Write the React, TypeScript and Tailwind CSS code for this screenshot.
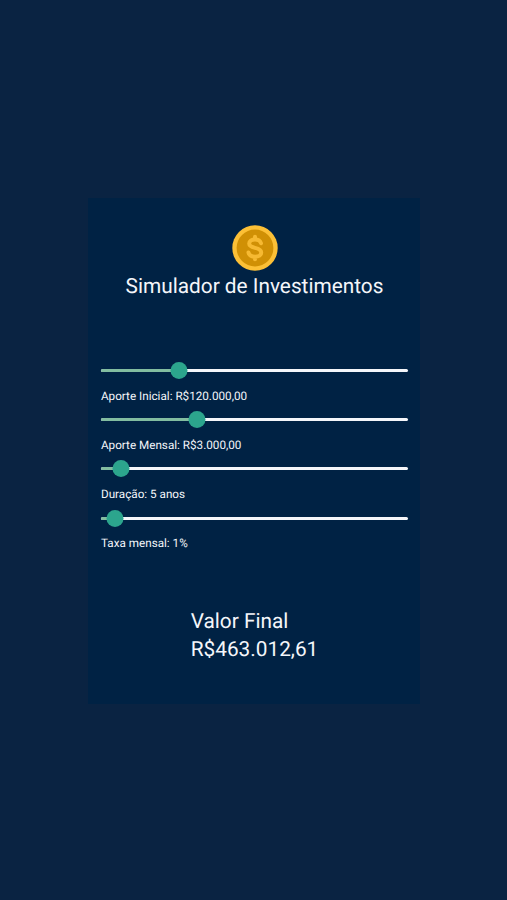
import React, { useMemo, useState } from 'react';
import * as Slider from '@radix-ui/react-slider';

const formatCurrency = (value: number) =>
  'R$' +
  value.toLocaleString('pt-BR', {
    minimumFractionDigits: 2,
    maximumFractionDigits: 2,
  });

function CoinIcon() {
  return (
    <svg className="block h-[46px] w-[46px]" viewBox="0 0 46 46" fill="none">
      <circle cx="23" cy="23" r="22.7" fill="#fcc036" />
      <circle cx="23" cy="23" r="18.4" fill="#d09005" />
      <path
        d="M29 18.300c-.7-2.400-2.800-3.800-6-3.800-3.500 0-5.800 1.600-5.800 4.100 0 2.900 2.700 3.600 5.800 4.300s6.200 1.500 6.200 4.600c0 2.600-2.500 4.200-6.100 4.200-3.500 0-6-1.600-6.600-4.200M23 11.800v2.500M23 32v2.300"
        stroke="#f6b932"
        strokeWidth="4"
        strokeLinecap="round"
        strokeLinejoin="round"
      />
    </svg>
  );
}

interface RangeFieldProps {
  name: string;
  label: string;
  value: number;
  min: number;
  max: number;
  step: number;
  onChange: (value: number) => void;
}

function RangeField({ name, label, value, min, max, step, onChange }: RangeFieldProps) {
  return (
    <div className="h-[49.2px]">
      <Slider.Root
        className="relative flex h-[17px] w-full touch-none items-center select-none"
        value={[value]}
        min={min}
        max={max}
        step={step}
        onValueChange={([next]) => onChange(next)}
      >
        <Slider.Track className="relative h-[3px] grow overflow-hidden rounded-full bg-[#f4f6fa]">
          <Slider.Range className="absolute h-full bg-[#82bda0]" />
        </Slider.Track>
        <Slider.Thumb
          aria-label={name}
          className="block size-[17px] rounded-full bg-[#2ca58d] outline-none"
        />
      </Slider.Root>
      <p className="mt-[8.5px] text-[11.7px] leading-4">{label}</p>
    </div>
  );
}

function App() {
  const [initial, setInitial] = useState(120000);
  const [monthly, setMonthly] = useState(3000);
  const [years, setYears] = useState(5);
  const [rate, setRate] = useState(1);

  const total = useMemo(() => {
    const months = years * 12;
    const i = rate / 100;
    if (i === 0) return initial + monthly * months;
    const growth = Math.pow(1 + i, months);
    return initial * growth + (monthly * (growth - 1)) / i;
  }, [initial, monthly, years, rate]);

  return (
    <div className="flex h-screen justify-center bg-[#0a2342] pt-[198px] font-[Roboto,sans-serif] text-[#f4f6fa] [text-rendering:geometricPrecision]">
      <main className="ml-px flex h-[506px] w-[332px] flex-col items-center bg-[#002244] pt-[27px] pr-3 pl-[13px]">
        {/* Header */}
        <CoinIcon />
        <h1 className="mt-px text-[20.8px] leading-[30px] whitespace-nowrap">Simulador de Investimentos</h1>

        {/* Sliders */}
        <section className="mt-[60px] w-full">
          <RangeField
            name="Aporte Inicial"
            label={`Aporte Inicial: ${formatCurrency(initial)}`}
            value={initial}
            min={0}
            max={500000}
            step={1000}
            onChange={setInitial}
          />
          <RangeField
            name="Aporte Mensal"
            label={`Aporte Mensal: ${formatCurrency(monthly)}`}
            value={monthly}
            min={0}
            max={10000}
            step={100}
            onChange={setMonthly}
          />
          <RangeField
            name="Duração"
            label={`Duração: ${years} anos`}
            value={years}
            min={1}
            max={100}
            step={1}
            onChange={setYears}
          />
          <RangeField
            name="Taxa mensal"
            label={`Taxa mensal: ${rate}%`}
            value={rate}
            min={0}
            max={50}
            step={1}
            onChange={setRate}
          />
        </section>

        {/* Result */}
        <div className="mt-[49px] text-[20.8px] leading-[28px]">
          <h2>Valor Final</h2>
          <p>{formatCurrency(total)}</p>
        </div>
      </main>
    </div>
  );
}

export default App;
